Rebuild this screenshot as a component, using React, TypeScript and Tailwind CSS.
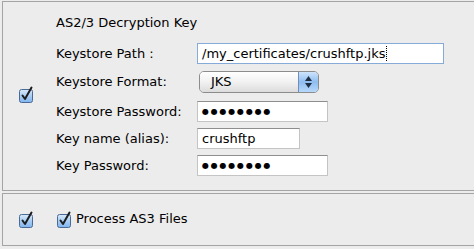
import React from 'react'

const font = { fontFamily: '"DejaVu Sans", "Liberation Sans", sans-serif' }

function AquaCheck() {
  return (
    <svg width="16" height="17" viewBox="0 0 16 17" className="block">
      <defs>
        <linearGradient id="cbfill" x1="0" y1="0" x2="0" y2="1">
          <stop offset="0" stopColor="#d9e9fb" />
          <stop offset="0.5" stopColor="#a9cdf4" />
          <stop offset="1" stopColor="#7fb4ee" />
        </linearGradient>
      </defs>
      <rect x="1.5" y="3.5" width="13" height="13" rx="2" fill="url(#cbfill)" stroke="#4a6a96" />
      <path d="M4.5 9.5 L7 13 L13.5 1.5" fill="none" stroke="#1d1d1d" strokeWidth="2" strokeLinecap="round" strokeLinejoin="round" />
    </svg>
  )
}

function TextField({ value, width, focused, dots }: { value: string; width: string; focused?: boolean; dots?: boolean }) {
  return (
    <div
      className={`h-[21px] ${width} bg-white flex items-center pl-[4px] border ${
        focused ? 'border-[#86abd9]' : 'border-[#c4c4c4] border-t-[#8e8e8e]'
      } text-[13px] text-black`}
      style={font}
    >
      {dots ? (
        <span className="text-[8px] tracking-[1.8px] leading-none">●●●●●●●●</span>
      ) : (
        <span className="leading-none">{value}</span>
      )}
      {focused && <span className="ml-[1px] w-px h-[15px] border-l border-dotted border-black" />}
    </div>
  )
}

function PopUp() {
  return (
    <div className="h-[22px] w-[120px] ml-[2px] flex rounded-[5px] border border-[#8c8c8c] overflow-hidden text-[13px] text-black" style={font}>
      <div className="flex-1 flex items-center pl-[11px] bg-gradient-to-b from-white via-[#f1f1f1] to-[#dcdcdc]">JKS</div>
      <div className="w-[20px] flex flex-col items-center justify-center gap-[2px] bg-gradient-to-b from-[#cfe4fb] via-[#8fbdf0] to-[#b7d8fb] border-l border-[#6f8fb8]">
        <svg width="7" height="5" viewBox="0 0 7 5"><path d="M3.5 0 L7 5 L0 5 Z" fill="#1f2f45" /></svg>
        <svg width="7" height="5" viewBox="0 0 7 5"><path d="M0 0 L7 0 L3.5 5 Z" fill="#1f2f45" /></svg>
      </div>
    </div>
  )
}

function Row({ label, children, mt }: { label: string; children: React.ReactNode; mt: string }) {
  return (
    <div className={`flex items-center ${mt}`}>
      <div className="w-[141px] text-[13px] text-black" style={font}>{label}</div>
      {children}
    </div>
  )
}

export default function App() {
  return (
    <div className="w-[474px] h-[249px] bg-[#ececec] overflow-hidden pt-[1px] pl-[2px]">
      {/* decryption key panel */}
      <div className="w-[490px] h-[190px] border border-r-0 border-[#a4a4a4] flex">
        <div className="w-[53px] flex items-center pl-[15px] pb-[3px]">
          <AquaCheck />
        </div>
        <div className="flex flex-col pt-[12px]">
          <div className="text-[13px] text-black leading-[18px]" style={font}>AS2/3 Decryption Key</div>
          <Row label="Keystore Path :" mt="mt-[11px]">
            <TextField value="/my_certificates/crushftp.jks" width="w-[247px]" focused />
          </Row>
          <Row label="Keystore Format:" mt="mt-[7px]">
            <PopUp />
          </Row>
          <Row label="Keystore Password:" mt="mt-[8px]">
            <TextField value="" width="w-[131px]" dots />
          </Row>
          <Row label="Key name (alias):" mt="mt-[6px]">
            <TextField value="crushftp" width="w-[103px]" />
          </Row>
          <Row label="Key Password:" mt="mt-[6px]">
            <TextField value="" width="w-[131px]" dots />
          </Row>
        </div>
      </div>
      {/* AS3 panel */}
      <div className="w-[490px] h-[53px] mt-[2px] border border-r-0 border-[#a4a4a4] flex items-center pl-[15px] pb-[1px]">
        <AquaCheck />
        <div className="ml-[22px] flex items-center gap-[4px]">
          <AquaCheck />
          <span className="text-[13px] text-black" style={font}>Process AS3 Files</span>
        </div>
      </div>
    </div>
  )
}
